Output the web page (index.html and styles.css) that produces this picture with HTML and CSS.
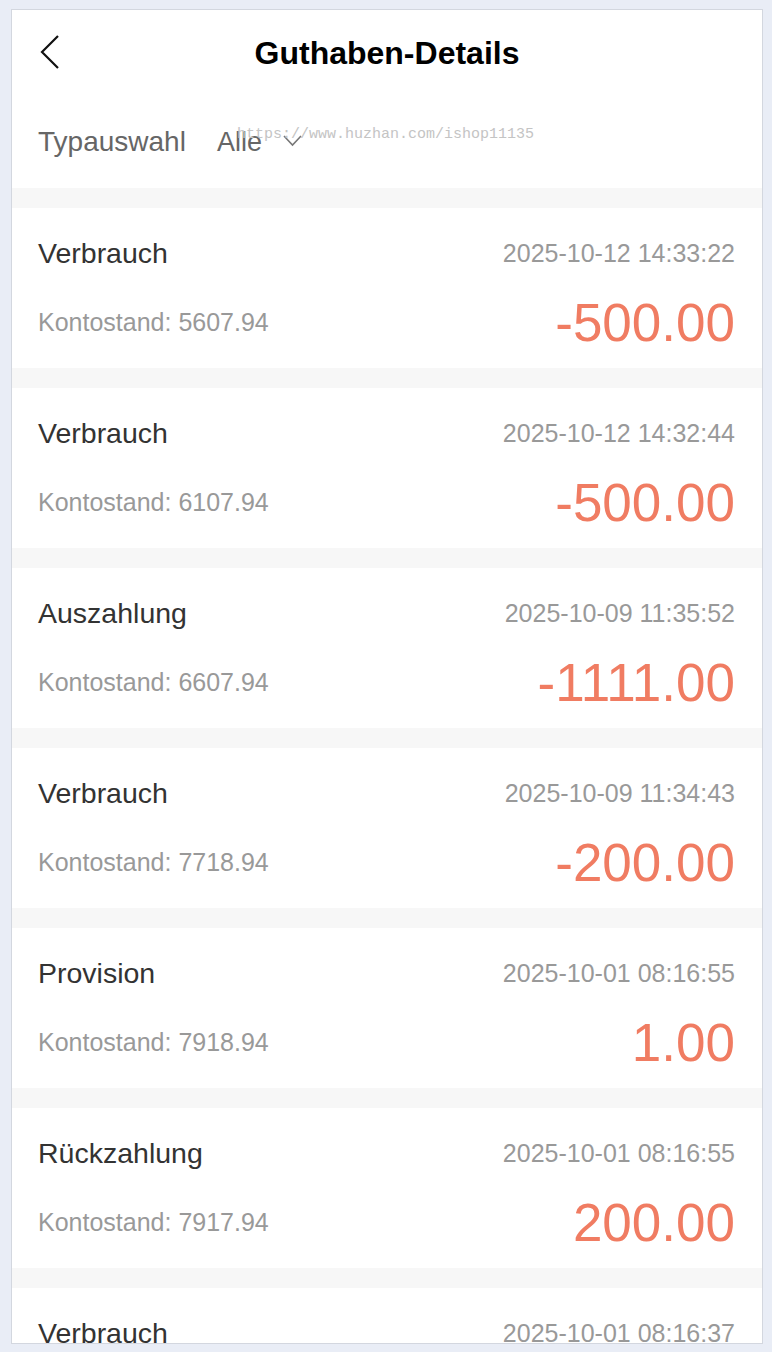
FILE: index.html
```html
<!DOCTYPE html>
<html lang="de">
<head>
  <meta charset="UTF-8" />
  <meta name="viewport" content="width=device-width, initial-scale=1.0"/>
  <title>Guthaben-Details</title>
  <link rel="stylesheet" href="styles.css">
</head>
<body>

  <div class="phone">
    <div class="nav-bar">
      <a class="back" href="#">
        <svg width="22" height="36" viewBox="0 0 22 36">
          <polyline points="19,2 3,18 19,34" fill="none" stroke="#111" stroke-width="2.2"/>
        </svg>
      </a>
      <h1>Guthaben-Details</h1>
      <span></span>
    </div>

    <div class="filter-row">
      <span class="filter-label">Typauswahl</span>
      <span class="filter-value">Alle</span>
      <svg class="chevron" width="19" height="12" viewBox="0 0 19 12">
        <polyline points="1,1 9.5,10 18,1" fill="none" stroke="#777" stroke-width="1.6"/>
      </svg>
      <span class="watermark">https://www.huzhan.com/ishop11135</span>
    </div>

    <div class="record-list" id="recordList"></div>
  </div>

  <script>
    const records = [
      { type: "Verbrauch", time: "2025-10-12 14:33:22", balance: "5607.94", amount: "-500.00" },
      { type: "Verbrauch", time: "2025-10-12 14:32:44", balance: "6107.94", amount: "-500.00" },
      { type: "Auszahlung", time: "2025-10-09 11:35:52", balance: "6607.94", amount: "-1111.00" },
      { type: "Verbrauch", time: "2025-10-09 11:34:43", balance: "7718.94", amount: "-200.00" },
      { type: "Provision", time: "2025-10-01 08:16:55", balance: "7918.94", amount: "1.00" },
      { type: "Rückzahlung", time: "2025-10-01 08:16:55", balance: "7917.94", amount: "200.00" },
      { type: "Verbrauch", time: "2025-10-01 08:16:37", balance: "7717.94", amount: "-200.00" }
    ];

    const list = document.getElementById("recordList");

    records.forEach(r => {
      const card = document.createElement("div");
      card.className = "record";
      card.innerHTML = `
        <div class="record-top">
          <span class="record-type">${r.type}</span>
          <span class="record-time">${r.time}</span>
        </div>
        <div class="record-bottom">
          <span class="record-balance">Kontostand: ${r.balance}</span>
          <span class="record-amount">${r.amount}</span>
        </div>`;
      list.appendChild(card);
    });
  </script>
</body>
</html>
```

FILE: styles.css
```css
body {
  font-family: "Liberation Sans", Arial, sans-serif;
  margin: 0;
  padding: 9px 0 0 11px;
  background-color: #e9edf6;
}

.phone {
  width: 750px;
  height: 1333px;
  border: 1px solid #d3d7df;
  background-color: #fff;
  overflow: hidden;
}

.nav-bar {
  height: 86px;
  display: grid;
  grid-template-columns: 100px 1fr 100px;
  align-items: center;
}

.back {
  display: flex;
  padding-left: 27px;
  padding-bottom: 2px;
}

.nav-bar h1 {
  margin: 0;
  text-align: center;
  font-size: 32px;
  font-weight: bold;
  color: #000;
}

.filter-row {
  position: relative;
  height: 92px;
  padding-left: 26px;
  display: flex;
  align-items: center;
  color: #666;
}

.filter-label {
  font-size: 28px;
}

.filter-value {
  font-size: 27px;
  margin-left: 31px;
}

.chevron {
  margin-left: 21px;
  margin-top: -2px;
}

.watermark {
  position: absolute;
  left: 225px;
  top: 30px;
  font-family: "Liberation Mono", "DejaVu Sans Mono", monospace;
  font-size: 15px;
  color: #c4c4c4;
}

.record-list {
  background-color: #f7f7f7;
  padding-top: 20px;
  display: flex;
  flex-direction: column;
  gap: 20px;
}

.record {
  height: 160px;
  box-sizing: border-box;
  padding: 30px 27px 0 26px;
  background-color: #fff;
}

.record-top,
.record-bottom {
  display: flex;
  justify-content: space-between;
  align-items: center;
}

.record-top {
  height: 30px;
}

.record-bottom {
  height: 56px;
  margin-top: 26px;
}

.record-type {
  font-size: 28.5px;
  color: #333;
}

.record-time {
  font-size: 25px;
  color: #999;
}

.record-balance {
  font-size: 25px;
  color: #999;
}

.record-amount {
  font-size: 53px;
  color: #f07c62;
}
```
